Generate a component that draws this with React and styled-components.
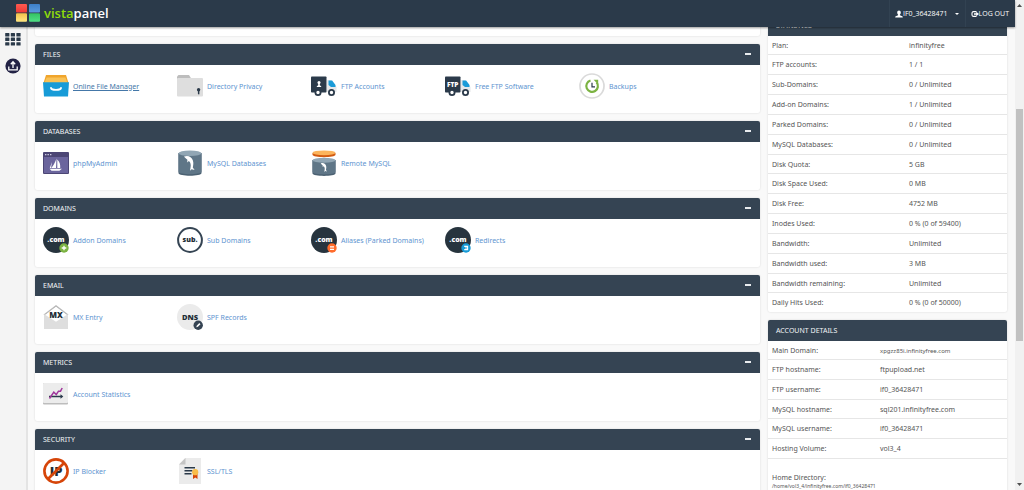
import React, { useState } from 'react'
import styled, { createGlobalStyle } from 'styled-components'

const GlobalStyle = createGlobalStyle`
  * {
    box-sizing: border-box;
  }
  body {
    margin: 0;
    font-family: "Noto Sans", "Open Sans", sans-serif;
    font-size: 7px;
    color: #555;
    background: #f9f9f9;
  }
`

const Page = styled.div`
  display: flex;
  height: 100vh;
  overflow: hidden;
`
const Window = styled.div`
  flex: 1;
  min-width: 0;
  display: flex;
  flex-direction: column;
`
const Header = styled.header`
  position: relative;
  z-index: 2;
  flex: none;
  display: flex;
  align-items: stretch;
  justify-content: space-between;
  height: 27px;
  padding-left: 15px;
  background: #2b3a4a;
  box-shadow: 0 1px 2px rgba(0, 0, 0, 0.4);
`
const Brand = styled.a`
  display: flex;
  align-items: center;
  gap: 3px;
  padding-bottom: 1px;
  color: #fff;
  font-family: "Open Sans", sans-serif;
  font-size: 13px;
  font-weight: 600;
  text-decoration: none;
`
const Green = styled.span`
  color: #8fdc0a;
`
const UserNav = styled.nav`
  display: flex;
`
const NavItem = styled.a`
  display: flex;
  align-items: center;
  padding: 0 6px 0 5px;
  border-left: 1px solid #324252;
  color: #fff;
  font-family: "Open Sans", sans-serif;
  font-size: 7px;
  text-transform: uppercase;
  text-decoration: none;
  white-space: nowrap;
`
const Caret = styled.span`
  margin-left: 7px;
  border: 2px solid transparent;
  border-top-color: #fff;
  border-bottom: 0;
`
const Body = styled.div`
  flex: 1;
  min-height: 0;
  display: flex;
`
const Sidebar = styled.nav`
  flex: none;
  display: flex;
  flex-direction: column;
  align-items: center;
  gap: 12px;
  width: 28px;
  padding: 6px 0 0 0;
  background: #f4f4f4;
  border-right: 2px solid #e4e4e4;
`
const SideLink = styled.a`
  display: block;
  line-height: 0;
`
const Content = styled.main`
  flex: 1;
  min-width: 0;
  display: grid;
  grid-template-columns: minmax(0, 1fr) 239px;
  gap: 8px;
  align-items: start;
  margin-top: -12px;
  padding: 0 8px 0 7px;
`
const Column = styled.div`
  display: flex;
  flex-direction: column;
  gap: 8px;
`
const Panel = styled.section`
  background: #fff;
  border-radius: 2px;
  box-shadow: 0 0 2px rgba(0, 0, 0, 0.15);
`
const Remainder = styled(Panel)`
  height: 21px;
`
const PanelHead = styled.div`
  display: flex;
  align-items: center;
  justify-content: space-between;
  height: 21px;
  padding: 0 8px;
  background: #354453;
  border-radius: 2px 2px 0 0;
`
const PanelTitle = styled.h2`
  margin: 0;
  color: #f2f4f6;
  font-size: 7px;
  font-weight: 400;
  text-transform: uppercase;
`
const Toggle = styled.button`
  display: flex;
  width: 8px;
  padding: 0 1px 2px;
  border: none;
  background: none;
  cursor: pointer;
`
const Tools = styled.div`
  display: grid;
  grid-template-columns: repeat(auto-fill, 134px);
  padding: 8px 0 14px 8px;
`
const Tool = styled.a`
  display: flex;
  align-items: center;
  gap: 4px;
  color: ${(p) => (p.$active ? '#4477a8' : '#6094d0')};
  text-decoration: ${(p) => (p.$active ? 'underline' : 'none')};
  white-space: nowrap;

  svg {
    flex: none;
  }
`
const Table = styled.table`
  width: 100%;
  height: ${(p) => p.$height};
  table-layout: fixed;
  border-collapse: collapse;

  th,
  td {
    padding: 0 4px;
    font-weight: 400;
    text-align: left;
    white-space: nowrap;
    border-bottom: 1px solid #e6e6e6;
  }
  th {
    width: ${(p) => p.$label};
  }
  tr:last-child > * {
    border-bottom: ${(p) => (p.$open ? '1px solid #e6e6e6' : 'none')};
  }
`
const Small = styled.span`
  font-size: 6px;
`
const HomeDir = styled.div`
  padding: 14px 4px 8px;
  line-height: 9px;
`
const Path = styled.div`
  font-size: 5px;
`
const Scrollbar = styled.div`
  flex: none;
  display: flex;
  flex-direction: column;
  align-items: center;
  width: 9px;
  padding: 4px 1px;
  background: #f1f1f1;
`
const Track = styled.div`
  flex: ${(p) => p.$size};
`
const Thumb = styled.div`
  flex: 232;
  width: 100%;
  background: #c1c1c1;
`

const Svg = ({ size = 26, box = 26, children }) => (
  <svg width={size} height={size} viewBox={`0 0 ${box} ${box}`} aria-hidden="true">
    {children}
  </svg>
)

const Label = ({ x = 13, y, size, fill = '#fff', children }) => (
  <text
    x={x}
    y={y}
    fontSize={size}
    fill={fill}
    textAnchor="middle"
    fontWeight="800"
    fontFamily="Open Sans, sans-serif"
  >
    {children}
  </text>
)

const LogoIcon = () => (
  <svg width="26" height="18" viewBox="0 0 26 18" aria-hidden="true">
    <defs>
      <linearGradient id="lr" x1="0" y1="0" x2="0" y2="1"><stop offset="0" stopColor="#ff5a50" /><stop offset="1" stopColor="#ee3a36" /></linearGradient>
      <linearGradient id="lb" x1="0" y1="0" x2="0" y2="1"><stop offset="0" stopColor="#3c7fc8" /><stop offset="1" stopColor="#5b9ade" /></linearGradient>
      <linearGradient id="ly" x1="0" y1="0" x2="0" y2="1"><stop offset="0" stopColor="#f2c04a" /><stop offset="1" stopColor="#ffe680" /></linearGradient>
      <linearGradient id="lg" x1="0" y1="0" x2="0" y2="1"><stop offset="0" stopColor="#34c264" /><stop offset="1" stopColor="#4fe084" /></linearGradient>
    </defs>
    <rect x="1" y="0" width="11" height="8.500" rx="1" fill="url(#lr)" />
    <rect x="14" y="0" width="11" height="8.500" rx="1" fill="url(#lb)" />
    <rect x="1" y="9.200" width="11" height="8.600" rx="1" fill="url(#ly)" />
    <rect x="14" y="9.200" width="11" height="8.600" rx="1" fill="url(#lg)" />
  </svg>
)

const UserIcon = () => (
  <Svg size={8} box={16}>
    <path fill="#fff" d="M8 1c2.200 0 3.600 1.700 3.600 4 0 1.700-.7 3.300-1.800 4v1.300l4.600 2c.7.300 1.100.8 1.100 1.500V15H.5v-1.200c0-.7.4-1.200 1.100-1.500l4.600-2V9C5.100 8.300 4.400 6.700 4.400 5c0-2.300 1.400-4 3.600-4z" />
  </Svg>
)

const LogoutIcon = () => (
  <Svg size={8} box={16}>
    <path fill="none" stroke="#fff" strokeWidth="2.200" d="M11 3.200H5A3 3 0 0 0 2 6v4a3 3 0 0 0 3 2.800h6" />
    <path fill="#fff" d="M6 6.300h4.500V3.500L16 8l-5.500 4.500V9.700H6z" />
  </Svg>
)

const GridIcon = () => (
  <svg width="16" height="13" viewBox="0 0 16 13" aria-hidden="true">
    {[0, 4.600, 9.200].map((y) =>
      [0, 5.600, 11.200].map((x) => (
        <rect key={`${x}-${y}`} x={x + 0.2} y={y} width="4.200" height="3.400" rx="0.500" fill="#2b3a4a" />
      ))
    )}
  </svg>
)

const UploadIcon = () => (
  <Svg size={16} box={16}>
    <circle cx="8" cy="8" r="7.600" fill="#222245" />
    <path d="M3.800 8.500v3.300h8.400V8.500M8 10V4.400M5.800 6.200 8 3.800l2.200 2.400" fill="none" stroke="#fff" strokeWidth="1.300" />
  </Svg>
)

const FileManagerIcon = () => (
  <Svg>
    <path d="M3 2h20l2.500 8H.5z" fill="#f0a52c" />
    <path d="M3.600 4.500h18.800L24.500 10H1.500z" fill="#f9c256" />
    <path d="M0 9.200h26l-1 14.300H1z" fill="#179bd7" />
    <path d="M8 15c.6 2.500 9.400 2.500 10 0" fill="none" stroke="#fff" strokeWidth="1.900" strokeLinecap="round" />
  </Svg>
)

const PrivacyIcon = () => (
  <Svg>
    <path d="M0 3.500 1.500 2H12l2.500 4H0z" fill="#bdbdbd" />
    <rect y="5" width="26" height="18.500" rx="1" fill="#dedede" />
    <circle cx="21.600" cy="16.800" r="1.700" fill="#2b3a4a" />
    <path d="M20.900 17h1.500v4.300h-1.500z" fill="#2b3a4a" />
  </Svg>
)

const Truck = ({ children }) => (
  <Svg>
    <path d="M16 7h4l5.500 7v5H16z" fill="#e6e8ea" />
    <path d="M17.500 7.500h3.600l3.400 4.400V14h-4.500l-2.500-2z" fill="#1a9bd8" />
    <rect y="3.500" width="15.500" height="16" rx="0.800" fill="#2b3a4a" />
    <circle cx="7" cy="19.500" r="2.600" fill="#fff" stroke="#2b3a4a" strokeWidth="1.800" />
    <circle cx="20.500" cy="19.500" r="2.600" fill="#fff" stroke="#2b3a4a" strokeWidth="1.800" />
    {children}
  </Svg>
)

const FtpAccountsIcon = () => (
  <Truck>
    <circle cx="8" cy="9.500" r="1.500" fill="#fff" />
    <path d="M7.200 10h1.600v2.300l1.400 1V14H5.800v-.7l1.400-1z" fill="#fff" />
  </Truck>
)

const FtpSoftwareIcon = () => (
  <Truck>
    <Label x={7.700} y={13.800} size={6.500}>FTP</Label>
  </Truck>
)

const BackupsIcon = () => (
  <Svg>
    <circle cx="13" cy="13" r="12" fill="#fff" stroke="#dadada" strokeWidth="1.700" />
    <path d="M11.500 7.500A5.800 5.800 0 1 0 17.600 9.400" fill="none" stroke="#7cb342" strokeWidth="2.200" />
    <path d="M14.600 6.700h4.600v4.700z" fill="#7cb342" />
    <path d="M13 9.800v4h3" fill="none" stroke="#2b3a4a" strokeWidth="1.200" />
  </Svg>
)

const PhpMyAdminIcon = () => (
  <Svg>
    <rect y="2" width="26" height="22" rx="1" fill="#4c4675" />
    <rect x="1" y="7" width="24" height="16" fill="#6b659d" />
    <path d="M2 4h1.400v1.200H2zM4.500 4h1.400v1.200H4.500zM7 4h1.400v1.200H7z" fill="#cfcce4" />
    <path d="M13.500 8.500 13 18H8.200c2.400-2.600 4.200-6 5.300-9.500zM14.300 9.500c2.600 2.400 3.200 5.400 2.900 8.500h-2.900zM9 12 8 18H6.800zM6.500 18.700h12.500l-2.600 2H8.500z" fill="#fff" />
  </Svg>
)

const dolphin =
  'M7 6.500c4-1.600 7.600.2 8.800 3.700 1 2.800.4 5 0 7.200l1.800 2.600-3-.7-1.600 1.400.5-3c.6-2.700.2-5-1.600-6.600l-1.700 1.300.2-2.600C9.300 8.600 8 8 7 6.500z'

const MysqlIcon = () => (
  <Svg>
    <path d="M1.500 3v20c0 3.600 23 3.600 23 0V3z" fill="#4b6172" />
    <path d="M1.500 3v18.500c0 3.600 23 3.600 23 0V3z" fill="#5f7687" />
    <ellipse cx="13" cy="3.200" rx="11.500" ry="2.800" fill="#91a6b4" />
    <path d={dolphin} fill="#fff" />
  </Svg>
)

const RemoteMysqlIcon = () => (
  <Svg>
    <path d="M1.500 3v1.800c0 3.200 23 3.200 23 0V3z" fill="#d25a10" />
    <ellipse cx="13" cy="2.800" rx="11.500" ry="2.400" fill="#fbb45c" />
    <path d="M1.500 10v13.500c0 3.200 23 3.200 23 0V10z" fill="#4b6172" />
    <path d="M1.500 10v12c0 3.200 23 3.200 23 0V10z" fill="#5f7687" />
    <ellipse cx="13" cy="10.300" rx="11.500" ry="2.500" fill="#91a6b4" />
    <g transform="translate(5.500 9.500) scale(0.6)">
      <path d={dolphin} fill="#fff" />
    </g>
  </Svg>
)

const DotCom = ({ color, children }) => (
  <Svg>
    <circle cx="13" cy="13" r="13" fill="#27343e" />
    <Label y={15.300} size={7}>.com</Label>
    <circle cx="21" cy="21" r="4.700" fill={color} />
    {children}
  </Svg>
)

const AddonIcon = () => (
  <DotCom color="#7cb342">
    <path d="M21 18.700v4.600M18.700 21h4.600" stroke="#fff" strokeWidth="1.300" />
  </DotCom>
)

const AliasIcon = () => (
  <DotCom color="#ff6c2c">
    <path d="M19 19.900h4M19 22.300h4" stroke="#fff" strokeWidth="1.300" />
  </DotCom>
)

const RedirectIcon = () => (
  <DotCom color="#179bd7">
    <path d="M19.200 19.400h3.400v3.200h-3.400M20.200 21h2.400" fill="none" stroke="#fff" strokeWidth="1.100" />
  </DotCom>
)

const SubIcon = () => (
  <Svg>
    <circle cx="13" cy="13" r="11.900" fill="#fff" stroke="#354453" strokeWidth="2" />
    <Label y={15.300} size={7} fill="#222d36">sub.</Label>
  </Svg>
)

const MxIcon = () => (
  <Svg>
    <path d="M1 11 13 2l12 9" fill="none" stroke="#b9b9b9" strokeWidth="1.500" />
    <path d="M1 10.500h24V25H1z" fill="#dedede" />
    <path d="M2.500 11 13 3l10.500 8L13 17.800z" fill="#fff" />
    <Label y={13.500} size={8} fill="#222d36">MX</Label>
  </Svg>
)

const DnsIcon = () => (
  <Svg>
    <circle cx="13" cy="13" r="13" fill="#ebebeb" />
    <Label y={15.500} size={7.500} fill="#222d36">DNS</Label>
    <circle cx="21.200" cy="21.300" r="4.700" fill="#354453" />
    <path d="m19.300 23.200.4-1.500 2.600-2.600 1.200 1.200-2.600 2.500z" fill="#fff" />
  </Svg>
)

const StatsIcon = () => (
  <Svg>
    <rect y="2" width="25" height="21.500" rx="1" fill="#bdbdbd" />
    <rect y="2" width="25" height="20" rx="1" fill="#ececec" />
    <path d="M6 15.500h12.500" stroke="#2b3a4a" strokeWidth="1.500" />
    <path d="M17.500 13.200v4.600l2.800-2.300z" fill="#2b3a4a" />
    <path d="m6.500 17.500 4.300-6.300 2.500 2.300 2.200-3.300h2L19.200 7" fill="none" stroke="#a0369c" strokeWidth="1.500" />
  </Svg>
)

const BlockerIcon = () => (
  <Svg>
    <circle cx="13" cy="13" r="11.500" fill="#fff" />
    <Label y={17.800} size={13} fill="#222d36">IP</Label>
    <circle cx="13" cy="13" r="11.600" fill="none" stroke="#d64509" strokeWidth="2.600" />
    <path d="M21 5 5 21" stroke="#d64509" strokeWidth="2.600" />
  </Svg>
)

const SslIcon = () => (
  <Svg>
    <path d="M8 0h16v26H2V6.500z" fill="#ebebeb" />
    <path d="M8.500 0v6.500H2z" fill="#c4c4c4" />
    <path d="M7.500 9.800h10.500M7.500 12.800h8M7.500 15.800h7" stroke="#2b3a4a" strokeWidth="1.400" />
    <path d="M16 16h4.500v5l-2.200-1.400L16 21z" fill="#d64509" />
    <circle cx="18.200" cy="14.200" r="3.100" fill="#f9bd4a" />
  </Svg>
)

const panels = [
  {
    title: 'Files',
    tools: [
      { name: 'Online File Manager', Icon: FileManagerIcon, active: true },
      { name: 'Directory Privacy', Icon: PrivacyIcon },
      { name: 'FTP Accounts', Icon: FtpAccountsIcon },
      { name: 'Free FTP Software', Icon: FtpSoftwareIcon },
      { name: 'Backups', Icon: BackupsIcon },
    ],
  },
  {
    title: 'Databases',
    tools: [
      { name: 'phpMyAdmin', Icon: PhpMyAdminIcon },
      { name: 'MySQL Databases', Icon: MysqlIcon },
      { name: 'Remote MySQL', Icon: RemoteMysqlIcon },
    ],
  },
  {
    title: 'Domains',
    tools: [
      { name: 'Addon Domains', Icon: AddonIcon },
      { name: 'Sub Domains', Icon: SubIcon },
      { name: 'Aliases (Parked Domains)', Icon: AliasIcon },
      { name: 'Redirects', Icon: RedirectIcon },
    ],
  },
  {
    title: 'Email',
    tools: [
      { name: 'MX Entry', Icon: MxIcon },
      { name: 'SPF Records', Icon: DnsIcon },
    ],
  },
  { title: 'Metrics', tools: [{ name: 'Account Statistics', Icon: StatsIcon }] },
  {
    title: 'Security',
    tools: [
      { name: 'IP Blocker', Icon: BlockerIcon },
      { name: 'SSL/TLS', Icon: SslIcon },
    ],
  },
]

const statistics = [
  ['Plan:', 'infinityfree'],
  ['FTP accounts:', '1 / 1'],
  ['Sub-Domains:', '0 / Unlimited'],
  ['Add-on Domains:', '1 / Unlimited'],
  ['Parked Domains:', '0 / Unlimited'],
  ['MySQL Databases:', '0 / Unlimited'],
  ['Disk Quota:', '5 GB'],
  ['Disk Space Used:', '0 MB'],
  ['Disk Free:', '4752 MB'],
  ['Inodes Used:', '0 % (0 of 59400)'],
  ['Bandwidth:', 'Unlimited'],
  ['Bandwidth used:', '3 MB'],
  ['Bandwidth remaining:', 'Unlimited'],
  ['Daily Hits Used:', '0 % (0 of 50000)'],
]

const account = [
  ['Main Domain:', <Small>xpgzz85i.infinityfree.com</Small>],
  ['FTP hostname:', 'ftpupload.net'],
  ['FTP username:', 'if0_36428471'],
  ['MySQL hostname:', 'sql201.infinityfree.com'],
  ['MySQL username:', 'if0_36428471'],
  ['Hosting Volume:', 'vol3_4'],
]

const ToolPanel = ({ title, tools }) => {
  const [open, setOpen] = useState(true)
  return (
    <Panel>
      <PanelHead>
        <PanelTitle>{title}</PanelTitle>
        <Toggle aria-label={`Toggle ${title}`} aria-expanded={open} onClick={() => setOpen(!open)}>
          <svg width="6" height="2" aria-hidden="true">
            <rect width="6" height="2" fill="#e8ebee" />
          </svg>
        </Toggle>
      </PanelHead>
      {open && (
        <Tools>
          {tools.map(({ name, Icon, active }) => (
            <Tool key={name} href="#" $active={active}>
              <Icon />
              {name}
            </Tool>
          ))}
        </Tools>
      )}
    </Panel>
  )
}

const InfoTable = ({ rows, ...rest }) => (
  <Table {...rest}>
    <tbody>
      {rows.map(([label, value]) => (
        <tr key={label}>
          <th scope="row">{label}</th>
          <td>{value}</td>
        </tr>
      ))}
    </tbody>
  </Table>
)

const App = () => {
  return (
    <Page>
      <GlobalStyle />
      <Window>
        <Header>
          <Brand href="#">
            <LogoIcon />
            <span><Green>vista</Green>panel</span>
          </Brand>
          <UserNav>
            <NavItem href="#">
              <UserIcon />
              if0_36428471
              <Caret />
            </NavItem>
            <NavItem href="#">
              <LogoutIcon />
              Log out
            </NavItem>
          </UserNav>
        </Header>
        <Body>
          <Sidebar>
            <SideLink href="#" aria-label="Home"><GridIcon /></SideLink>
            <SideLink href="#" aria-label="Upload"><UploadIcon /></SideLink>
          </Sidebar>
          <Content>
            <Column>
              <Remainder />
              {panels.map((panel) => (
                <ToolPanel key={panel.title} {...panel} />
              ))}
            </Column>
            <Column>
              <Panel>
                <PanelHead><PanelTitle>Statistics</PanelTitle></PanelHead>
                <InfoTable rows={statistics} $height="276px" $label="137px" />
              </Panel>
              <Panel>
                <PanelHead><PanelTitle>Account Details</PanelTitle></PanelHead>
                <InfoTable rows={account} $height="118px" $label="108px" $open />
                <HomeDir>
                  Home Directory:
                  <Path>/home/vol3_4/infinityfree.com/if0_36428471</Path>
                </HomeDir>
              </Panel>
            </Column>
          </Content>
        </Body>
      </Window>
      <Scrollbar>
        <svg width="5" height="3" aria-hidden="true"><path d="M0 3 2.500 0 5 3z" fill="#505050" /></svg>
        <Track $size={102} />
        <Thumb />
        <Track $size={142} />
        <svg width="5" height="3" aria-hidden="true"><path d="M0 0h5L2.500 3z" fill="#505050" /></svg>
      </Scrollbar>
    </Page>
  )
}

export default App
